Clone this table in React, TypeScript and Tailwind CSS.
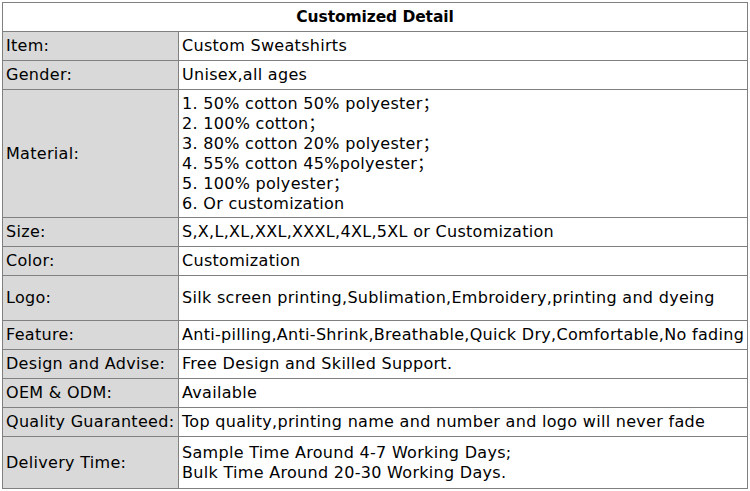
// Tabla de detalle de producto personalizado
const rows: { label: string; value: string[]; h: string }[] = [
  { label: 'Item:', value: ['Custom Sweatshirts'], h: 'h-[29px]' },
  { label: 'Gender:', value: ['Unisex,all ages'], h: 'h-[29px]' },
  {
    label: 'Material:',
    value: [
      '1. 50% cotton 50% polyester；',
      '2. 100% cotton；',
      '3. 80% cotton 20% polyester；',
      '4. 55% cotton 45%polyester；',
      '5. 100% polyester；',
      '6. Or customization',
    ],
    h: 'h-[128px]',
  },
  { label: 'Size:', value: ['S,X,L,XL,XXL,XXXL,4XL,5XL or Customization'], h: 'h-[29px]' },
  { label: 'Color:', value: ['Customization'], h: 'h-[29px]' },
  { label: 'Logo:', value: ['Silk screen printing,Sublimation,Embroidery,printing and dyeing'], h: 'h-[45px]' },
  { label: 'Feature:', value: ['Anti-pilling,Anti-Shrink,Breathable,Quick Dry,Comfortable,No fading'], h: 'h-[29px]' },
  { label: 'Design and Advise:', value: ['Free Design and Skilled Support.'], h: 'h-[29px]' },
  { label: 'OEM & ODM:', value: ['Available'], h: 'h-[29px]' },
  { label: 'Quality Guaranteed:', value: ['Top quality,printing name and number and logo will never fade'], h: 'h-[29px]' },
  {
    label: 'Delivery Time:',
    value: ['Sample Time Around 4-7 Working Days;', 'Bulk Time Around 20-30 Working Days.'],
    h: 'h-[52px]',
  },
];

export default function App() {
  return (
    <div className="w-[750px] h-[491px] bg-white pt-[2px] pl-[2px] font-['DejaVu_Sans','Noto_Sans_CJK_SC',Verdana,sans-serif] text-[16px] leading-[20px] tracking-[0.3px] text-black">
      <div className="w-[746px] border border-[#808080]">
        <div className="h-[28px] flex items-center justify-center font-bold text-[15.5px] tracking-[-0.1px]">
          Customized Detail
        </div>
        {rows.map((r) => (
          <div key={r.label} className={`flex border-t border-[#808080] ${r.h}`}>
            <div className="w-[175px] shrink-0 bg-[#d9d9d9] flex items-center pl-[3px] whitespace-nowrap">
              {r.label}
            </div>
            <div className="flex-1 border-l border-[#808080] flex flex-col justify-center pl-[3px] whitespace-nowrap">
              {r.value.map((v) => (
                <div key={v}>{v}</div>
              ))}
            </div>
          </div>
        ))}
      </div>
    </div>
  );
}
